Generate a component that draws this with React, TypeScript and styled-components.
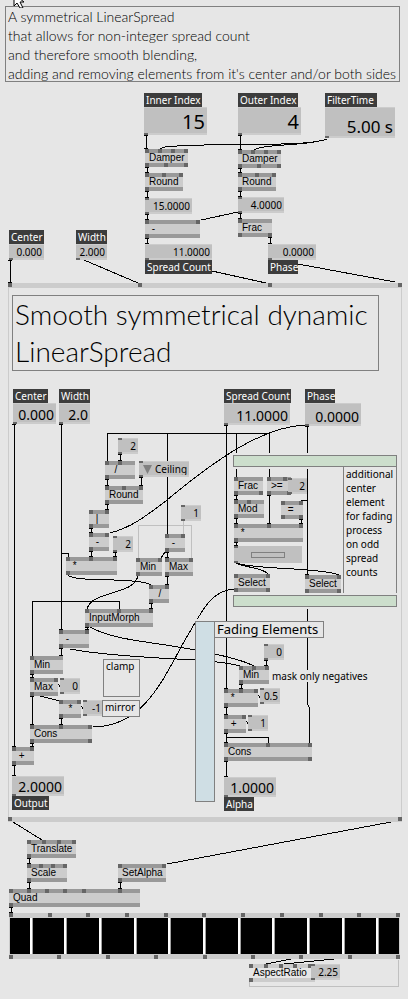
import React, { useId, useState } from "react";
import styled, { createGlobalStyle } from "styled-components";

const GlobalStyle = createGlobalStyle`
  * { box-sizing: border-box; }
  body { margin: 0; background: #e6e6e6; }
`;

const sans = `"Noto Sans", "Open Sans", sans-serif`;
const light = `Lato, "Open Sans", sans-serif`;

type Place = { $x: number; $y: number; $w?: number; $h?: number };

const Canvas = styled.main`
  position: relative;
  display: flex;
  flex-direction: column;
  min-height: 100vh;
  padding: 6px 6px 40px 8px;
  background: #e6e6e6;
  color: #000;
  overflow: hidden;
  font: 10px/14px ${sans};
`;

const Wires = styled.svg`
  position: absolute;
  left: 0;
  top: 0;
  width: 100%;
  height: 100%;
  fill: none;
  stroke: #000;
  shape-rendering: crispEdges;
`;

const Pointer = styled.svg`
  position: absolute;
  left: 12px;
  top: 0;
  width: 14px;
  height: 8px;
`;

const Placed = styled.div<Place>`
  position: absolute;
  left: ${(p) => p.$x}px;
  top: ${(p) => p.$y}px;
  width: ${(p) => (p.$w ? `${p.$w}px` : "max-content")};
  height: ${(p) => (p.$h ? `${p.$h}px` : "auto")};
`;

const Comment = styled(Placed)`
  padding: 0 2px;
  border: 1px solid #808080;
  background: #e6e6e6;
  line-height: 12px;
  white-space: nowrap;
`;

const Intro = styled.p`
  height: 76px;
  margin: 0 2px 0 -3px;
  padding: 0 0 0 2px;
  border: 1px solid #808080;
  font: 300 14px/19px ${light};
  white-space: pre;
`;

const Heading = styled.h1`
  margin: 7px 22px 0 3px;
  padding: 0 2px;
  border: 1px solid #808080;
  font: 300 28px/37px ${light};
`;

const Section = styled(Comment).attrs({ as: "h2" })`
  margin: 0;
  font: 400 13px/15px ${sans};
`;

const SideNote = styled(Comment)`
  line-height: 14px;
  white-space: pre;
`;

const Remark = styled(Placed)`
  background: #e6e6e6;
  line-height: 12px;
`;

const Area = styled(Placed)<{ $tone: string }>`
  border: 1px solid #808080;
  background: ${(p) => p.$tone};
  box-shadow: 0 2px #e6e6e6, 0 -2px #e6e6e6;
`;

const NodeBox = styled(Placed)<{ $pale?: boolean }>`
  height: 18px;
  border: solid ${(p) => (p.$pale ? "#cccccc" : "#999999")};
  border-width: 4px 0;
  background: ${(p) => (p.$pale ? "#e6e6e6" : "#cccccc")};
  padding-left: 4px;
  font: 10px/10px "Liberation Sans", Arial, sans-serif;
  white-space: pre;
`;

const Pin = styled.span<{ $at: number; $end?: boolean; $inset?: boolean }>`
  position: absolute;
  left: ${(p) => p.$at}px;
  ${(p) => (p.$end ? "bottom" : "top")}: ${(p) => (p.$inset ? 0 : -4)}px;
  width: 4px;
  height: ${(p) => (p.$inset ? 2 : 4)}px;
  background: #666;
`;

const Value = styled(Placed)`
  display: flex;
`;

const ValueInput = styled.input<{ $size: number; $drop: number }>`
  width: 100%;
  min-width: 0;
  margin: 0;
  padding: ${(p) => p.$drop}px 2px 0 0;
  border: solid #cccccc;
  border-width: 1px 0 2px;
  border-radius: 0;
  outline-offset: -1px;
  background: #c0c0c0;
  color: #000;
  font: ${(p) => p.$size}px ${sans};
  line-height: 1;
  text-align: right;
`;

const Caption = styled(Placed).attrs({ as: "label" })<{ htmlFor?: string }>`
  height: 14px;
  padding-left: 2px;
  background: #3c3c3c;
  color: #fff;
  white-space: nowrap;
`;

const Choice = styled.select`
  appearance: none;
  width: 100%;
  margin: 0;
  padding: 0 2px 0 16px;
  border: solid #cccccc;
  border-width: 1px 0 2px;
  border-radius: 0;
  background: #c0c0c0;
  color: #000;
  font: 10px ${sans};
`;

const Arrow = styled.svg`
  position: absolute;
  left: 4px;
  top: 4px;
  width: 9px;
  height: 9px;
  fill: #808080;
  pointer-events: none;
`;

const Bang = styled.button`
  display: grid;
  place-items: center;
  width: 100%;
  padding: 0;
  border: 0;
  background: #c0c0c0;
`;

const BangFace = styled.span`
  width: 34px;
  height: 6px;
  border: 1px solid #808080;
`;

const FreeSpace = styled.div<{ $height: number }>`
  flex: none;
  height: ${(p) => p.$height}px;
`;

const Patch = styled.section`
  display: flex;
  flex-direction: column;
`;

const PatchBody = styled.div`
  border: solid #cccccc;
  border-width: 0 1px;
  display: flex;
  flex-direction: column;
`;

const PinRow = styled.div<{ $tall?: boolean }>`
  display: flex;
  justify-content: space-between;
  height: ${(p) => (p.$tall ? 5 : 4)}px;
  background: #cccccc;
`;

const Dot = styled.span`
  width: 4px;
  height: 4px;
  background: #666;
`;

const Renderer = styled.section`
  margin: 0 2px 0 1px;
  background: #cccccc;
`;

const Quads = styled.div`
  display: flex;
  gap: 1px;
  height: 36px;
  margin: 1px;
  background: #a0a0a0;
`;

const Quad = styled.span<{ $grow: number; $last?: boolean }>`
  flex: ${(p) => p.$grow} 1 0;
  background: #000;
  border-right: ${(p) => (p.$last ? 0 : 2)}px solid #fff;
`;

type NodeSpec = [label: string, x: number, y: number, w: number, ins: number[], outs: number[]];

const nodes: NodeSpec[] = [
  ["Damper", 145, 149, 43, [0, 13, 26, 39], [0, 19, 39]],
  ["Round", 145, 173, 38, [0, 17, 34], [0]],
  ["Damper", 238, 150, 43, [0, 13, 26, 39], [0, 19, 39]],
  ["Round", 238, 173, 38, [0, 17, 34], [0]],
  [" -", 145, 220, 55, [0, 51], [0]],
  ["Frac", 238, 219, 34, [0], [0, 30]],
  ["  /", 105, 461, 30, [0, 13], [0]],
  ["Round", 105, 486, 38, [0, 17, 34], [0]],
  [" |", 89, 510, 20, [0, 16], [0]],
  [" -", 89, 533, 20, [0, 16], [0]],
  [" *", 66, 557, 51, [0, 23, 47], [0]],
  [" -", 165, 534, 20, [0, 16], [0]],
  ["Min", 136, 558, 26, [0, 22], [0]],
  ["Max", 165, 558, 28, [0, 24], [0]],
  ["  /", 149, 585, 20, [0, 16], [0]],
  ["InputMorph", 85, 609, 68, [0, 32, 64], [0]],
  [" -", 59, 630, 30, [0, 26], [0]],
  ["Min", 30, 656, 33, [0], [0]],
  ["Max", 30, 678, 28, [0, 24], [0]],
  ["  *", 59, 700, 22, [0, 18], [0]],
  ["Cons", 30, 725, 62, [0, 29, 58], [0, 58]],
  [" +", 12, 747, 22, [0, 18], [0]],
  ["Frac", 234, 477, 29, [0], [0, 25]],
  [">=", 267, 477, 24, [0, 16], [0, 20]],
  ["Mod", 234, 500, 30, [0, 13], [0]],
  [" =", 281, 501, 22, [0, 18], [0, 18]],
  [" *", 234, 524, 69, [0, 33, 65], [0]],
  ["Select", 234, 574, 36, [0, 32], [0, 32]],
  ["Select", 305, 575, 36, [0, 32], [0, 32]],
  ["Min", 239, 666, 30, [0, 13, 26], [0]],
  [" *", 224, 689, 34, [0, 15, 30], [0]],
  [" +", 224, 715, 22, [0, 18], [0]],
  ["Cons", 224, 743, 88, [0, 42, 84], [0, 84]],
  ["Translate", 27, 840, 49, [0, 15, 30, 45], [0]],
  ["Scale", 27, 864, 40, [0, 12, 24, 36], [0]],
  ["SetAlpha", 118, 864, 48, [0, 44], [0]],
  ["Quad", 9, 889, 131, [0, 18, 36, 54, 73, 109], [0]],
];

type ValueSpec = {
  v: string; x: number; y: number; w: number; h?: number; size?: number; drop?: number;
  name: string; cap?: [y: number, w: number];
};

const values: ValueSpec[] = [
  { v: "15", x: 144, y: 107, w: 63, h: 28, size: 20, drop: 2, name: "Inner Index", cap: [93, 58] },
  { v: "4", x: 238, y: 107, w: 63, h: 28, size: 20, drop: 2, name: "Outer Index", cap: [93, 60] },
  { v: "5.00 s", x: 325, y: 107, w: 70, h: 31, size: 17, drop: 8, name: "FilterTime", cap: [93, 52] },
  { v: "15.0000", x: 145, y: 198, w: 47, name: "Inner rounded" },
  { v: "4.0000", x: 238, y: 197, w: 46, name: "Outer rounded" },
  { v: "0.000", x: 9, y: 244, w: 35, name: "Center", cap: [230, 35] },
  { v: "2.000", x: 76, y: 244, w: 31, name: "Width", cap: [230, 31] },
  { v: "11.0000", x: 145, y: 244, w: 67, name: "Spread Count", cap: [260, 67] },
  { v: "0.0000", x: 268, y: 244, w: 48, name: "Phase", cap: [260, 30] },
  { v: "0.000", x: 13, y: 403, w: 43, h: 21, size: 14, drop: 2, name: "Center", cap: [389, 35] },
  { v: "2.0", x: 59, y: 403, w: 31, h: 21, size: 14, drop: 2, name: "Width", cap: [389, 31] },
  { v: "11.0000", x: 224, y: 403, w: 66, h: 22, size: 14, drop: 4, name: "Spread Count", cap: [389, 67] },
  { v: "0.0000", x: 305, y: 403, w: 56, h: 23, size: 14, drop: 4, name: "Phase", cap: [389, 30] },
  { v: "2", x: 118, y: 438, w: 20, name: "Divisor" },
  { v: "2", x: 113, y: 536, w: 20, name: "Factor" },
  { v: "1", x: 181, y: 505, w: 20, name: "Subtrahend" },
  { v: "0", x: 60, y: 678, w: 20, name: "Lower bound" },
  { v: "-1", x: 83, y: 700, w: 20, name: "Sign" },
  { v: "2", x: 288, y: 478, w: 19, name: "Threshold" },
  { v: "0", x: 264, y: 644, w: 20, name: "Upper bound" },
  { v: "0.5", x: 260, y: 688, w: 20, name: "Half" },
  { v: "1", x: 248, y: 715, w: 20, name: "Offset" },
  { v: "2.0000", x: 12, y: 776, w: 52, h: 20, size: 14, drop: 2, name: "Output", cap: [796, 37] },
  { v: "1.0000", x: 224, y: 777, w: 52, h: 20, size: 14, drop: 2, name: "Alpha", cap: [797, 30] },
  { v: "2.25", x: 311, y: 964, w: 29, name: "Ratio" },
];

/* Straight connections: pin x, start y, end y. */
const links: [number, number, number][] = [
  [144, 135, 149], [145, 167, 173], [145, 191, 198], [145, 214, 220], [145, 238, 244],
  [238, 135, 150], [238, 168, 173], [238, 191, 197], [238, 213, 219], [268, 237, 244],
  [8, 260, 283], [12, 424, 747], [59, 424, 630],
  [118, 454, 461], [105, 479, 486], [139, 477, 486], [105, 504, 510], [89, 528, 533],
  [89, 551, 557], [113, 552, 557], [165, 552, 558], [165, 576, 585], [149, 603, 609],
  [85, 627, 630], [59, 648, 656], [30, 674, 678], [30, 696, 725], [30, 743, 747],
  [59, 718, 725], [12, 765, 776],
  [224, 425, 689], [305, 426, 575], [234, 495, 500], [234, 518, 524], [267, 495, 524],
  [299, 519, 524], [234, 542, 546], [264, 660, 666], [239, 684, 689], [224, 707, 715],
  [224, 733, 743], [224, 761, 777],
  [27, 858, 864], [27, 882, 889], [118, 882, 889], [9, 907, 913],
];

const curves = [
  "M327 139C305 148 205 142 165 147Q160 148 160 150",
  "M327 139C305 147 260 143 253 151",
  "M238 212L201 220",
  "M84 260L138 283",
  "M212 271L266 283",
  "M298 264L395 282",
  "M107.5 461V433.5H269.5V477M167.5 433.5V534M236.5 433.5V477",
  "M305 425C262 427 215 460 167 500C145 517 130 528 110 533",
  "M61.5 553.5H68.5V557",
  "M68 575Q70 578 85 579C110 580 145 580 151 585",
  "M138 576C133 596 92 590 87 609",
  "M119.5 609V601.5H32.5V656",
  "M90 627C115 641 150 641 195 650C220 655 240 659 254 666",
  "M70 649C105 656 160 658 195 660Q225 662 240 666",
  "M93 727C145 727 165 675 185 640C202 612 210 590 235 589",
  "M165 552L161 558",
  "M40 696L60 701",
  "M57 682L60 687",
  "M80 704L83 709",
  "M257 693L260 698",
  "M245 719L248 724",
  "M301 500.5H307",
  "M236 563C245 568 262 567 268 574",
  "M236 563C255 570 320 567 339 575",
  "M307.5 609V704L309.5 708V743",
  "M226 737.5H268.5V743",
  "M13 822L42 840",
  "M391 822L167 864",
  "M291 959L266 964",
  "M334 959L284 964",
];

const greyWires = [
  "M138.5 558V525.5H191.5V558",
  "M183.5 521V534",
  "M249.5 982V986.5H398.5V960",
];

function Node({ spec, pale }: { spec: NodeSpec; pale?: boolean }) {
  const [label, x, y, w, ins, outs] = spec;
  return (
    <NodeBox $x={x} $y={y} $w={w} $pale={pale}>
      {ins.map((at) => <Pin key={`i${at}`} $at={at} />)}
      {label}
      {outs.map((at) => <Pin key={`o${at}`} $at={at} $end />)}
    </NodeBox>
  );
}

function ValueBox({ spec }: { spec: ValueSpec }) {
  const id = useId();
  const [value, setValue] = useState(spec.v);
  return (
    <>
      <Value $x={spec.x} $y={spec.y} $w={spec.w} $h={spec.h ?? 16}>
        <ValueInput
          id={id}
          $size={spec.size ?? 10}
          $drop={spec.drop ?? 0}
          value={value}
          aria-label={spec.cap ? undefined : spec.name}
          onChange={(e) => setValue(e.target.value)}
        />
        {!spec.cap && <Pin $at={0} $inset />}
        <Pin $at={0} $end $inset />
      </Value>
      {spec.cap && (
        <Caption htmlFor={id} $x={spec.x} $y={spec.cap[0]} $w={spec.cap[1]}>{spec.name}</Caption>
      )}
    </>
  );
}

const dots = (n: number) => Array.from({ length: n }, (_, i) => <Dot key={i} />);

export default function App() {
  return (
    <>
      <GlobalStyle />
      <Canvas>
        <Intro>
          {"A symmetrical LinearSpread\nthat allows for non-integer spread count\nand therefore smooth blending,\nadding and removing elements from it's center and/or both sides"}
        </Intro>
        <FreeSpace $height={201} />
        <Patch>
          <PinRow $tall>{dots(4)}</PinRow>
          <PatchBody>
            <Heading>Smooth symmetrical dynamic LinearSpread</Heading>
            <FreeSpace $height={446} />
          </PatchBody>
          <PinRow $tall>{dots(2)}</PinRow>
        </Patch>
        <FreeSpace $height={91} />
        <Renderer>
          <PinRow>{dots(11)}</PinRow>
          <Quads>
            {Array.from({ length: 12 }, (_, i) => (
              <Quad key={i} $grow={i % 11 === 0 ? 20 : 32} $last={i === 11} />
            ))}
          </Quads>
          <PinRow>{dots(9)}</PinRow>
        </Renderer>

        <Wires aria-hidden="true">
          {greyWires.map((d) => <path key={d} d={d} stroke="#c0c0c0" />)}
          {links.map(([x, a, b]) => (
            <path key={`${x}-${a}`} d={`M${x} ${a + 0.5}h4M${x + 2.5} ${a}V${b}M${x} ${b - 0.5}h4`} />
          ))}
          {curves.map((d) => <path key={d} d={d} />)}
        </Wires>

        <Area $x={233} $y={455} $w={164} $h={12} $tone="#ccdecc" />
        <SideNote $x={343} $y={466} $w={54} $h={130}>
          {"additional\ncenter\nelement\nfor fading\nprocess\non odd\nspread\ncounts"}
        </SideNote>
        <Area $x={233} $y={595} $w={164} $h={12} $tone="#ccdecc" />
        <Area $x={195} $y={621} $w={20} $h={181} $tone="#cfdee4" />
        <Section $x={214} $y={621} $w={110} $h={17}>Fading Elements</Section>
        <Comment $x={103} $y={659} $w={37} $h={38}>clamp</Comment>
        <Remark $x={272} $y={670}>mask only negatives</Remark>

        {nodes.map((spec) => <Node key={`${spec[1]}-${spec[2]}`} spec={spec} />)}
        <Node pale spec={["AspectRatio  .", 249, 964, 66, [0, 15, 30, 44, 59], [0]]} />
        {values.map((spec) => <ValueBox key={`${spec.x}-${spec.y}`} spec={spec} />)}
        <Comment $x={102} $y={700} $w={38} $h={17}>mirror</Comment>

        <Value $x={139} $y={461} $w={50} $h={16}>
          <Choice aria-label="Rounding" defaultValue="Ceiling">
            <option>Ceiling</option>
            <option>Floor</option>
          </Choice>
          <Arrow viewBox="0 0 9 9"><path d="M0 0H9L4.5 9Z" /></Arrow>
          <Pin $at={0} $inset />
          <Pin $at={0} $end $inset />
        </Value>
        <Value $x={234} $y={546} $w={68} $h={17}>
          <Bang type="button" aria-label="Enable center element"><BangFace /></Bang>
          <Pin $at={0} $inset />
          <Pin $at={0} $end $inset />
        </Value>

        <Pointer viewBox="0 0 14 8" aria-hidden="true">
          <path d="M2 -6V6L5 3L8 8H11L8 2H12Z" fill="#fff" stroke="#000" />
        </Pointer>
      </Canvas>
    </>
  );
}
